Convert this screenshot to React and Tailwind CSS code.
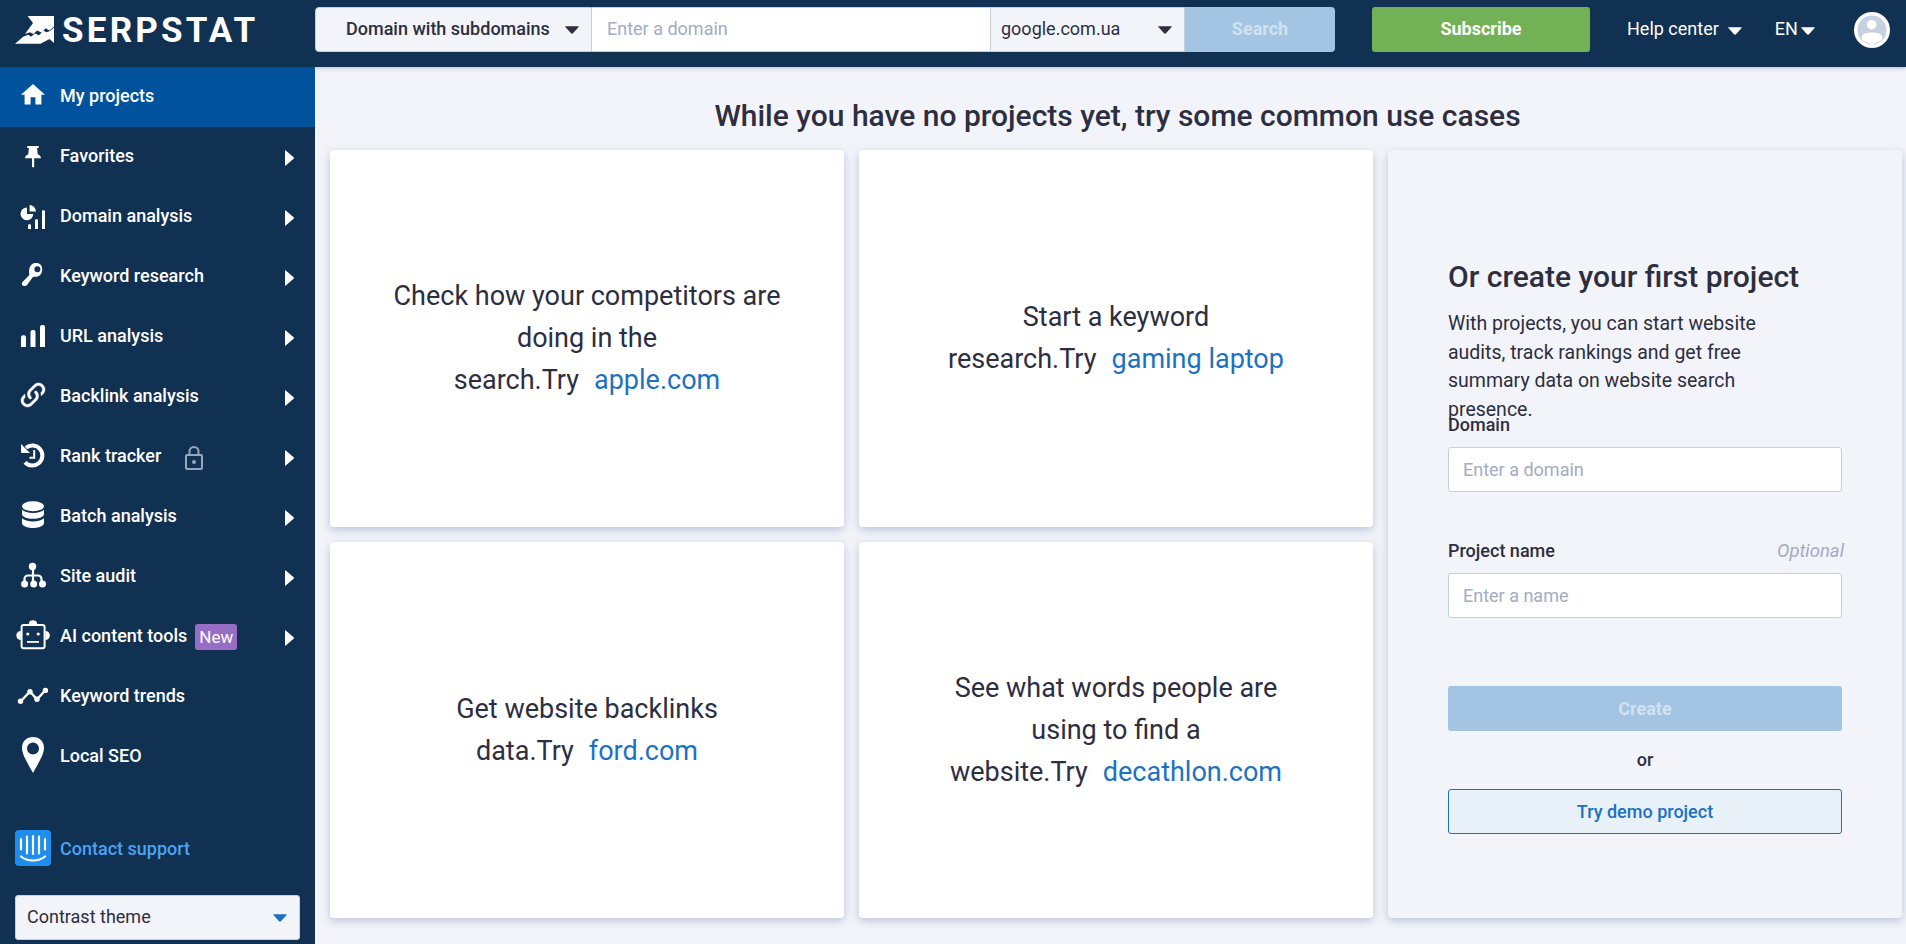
import React from "react";

const Caret = ({ className = "" }) => (
  <svg className={`h-2 w-3.5 shrink-0 ${className}`} viewBox="0 0 14 8" fill="currentColor">
    <path d="M0.6 0.3h12.8q.6 0 .2.6L8 7.2q-1 .9-2 0L.4.9Q0 .3.6.3z" />
  </svg>
);

const icons = {
  home: <path transform="translate(5.6 3.4) scale(1.2)" d="M10 20v-6h4v6h5v-8h3L12 3 2 12h3v8z" />,
  pin: <path d="M14.3 9h11.4v2h-1.6l.6 6.3c2 .8 3.3 2.1 3.3 4h-6.8v9h-2.2v-9h-7c0-1.900 1.300-3.200 3.300-4l.6-6.300h-1.600z" />,
  domain: (
    <>
      <path d="M14 10.500v6.500h6.300a6.400 6.400 0 1 1-6.300-6.500z" />
      <path d="M16.600 8a6.600 6.600 0 0 1 6.300 6.500h-6.300z" />
      <path d="M15 32v-3.500a1.500 1.500 0 0 1 3 0V32zM22 32v-8.500a1.500 1.500 0 0 1 3 0V32zM29 32V14.500a1.500 1.500 0 0 1 3 0V32z" />
    </>
  ),
  key: (
    <path
      fillRule="evenodd"
      d="M22 6c4.500-.5 7.500 2.300 7.200 6.700-.3 4.800-3.600 7.700-7.700 7-.9-.1-1.500.1-2 .800l-5.500 7.500c-1 1.300-3.800 1.600-4.800 0-.6-1-.3-2.300.5-3.300l6-5.900c.600-.6.7-1.100.5-2C15.400 10.500 18 6.500 22 6zm2.400 3.200a3 3 0 1 0 0 6 3 3 0 0 0 0-6z"
    />
  ),
  bars: <path d="M8 30V20.300a2 2 0 0 1 2-2h1a2 2 0 0 1 2 2V30zM17.500 30V15a2 2 0 0 1 2-2h1a2 2 0 0 1 2 2v15zM27 30V10a2 2 0 0 1 2-2h1a2 2 0 0 1 2 2v20z" />,
  link: (
    <path
      transform="translate(4.400 2.400) scale(1.300)"
      stroke="currentColor"
      strokeWidth="0.3"
      d="M10.590,13.410C11,13.800 11,14.440 10.590,14.830C10.200,15.220 9.560,15.220 9.170,14.830C7.220,12.880 7.220,9.710 9.170,7.760V7.760L12.710,4.220C14.660,2.270 17.830,2.270 19.780,4.220C21.730,6.170 21.730,9.340 19.780,11.290L18.290,12.780C18.300,11.960 18.170,11.140 17.890,10.360L18.360,9.880C19.540,8.710 19.540,6.810 18.360,5.640C17.190,4.460 15.290,4.460 14.120,5.640L10.590,9.170C9.410,10.340 9.410,12.240 10.590,13.410M13.410,9.170C13.800,8.780 14.440,8.780 14.830,9.170C16.780,11.120 16.780,14.290 14.830,16.240V16.240L11.290,19.780C9.340,21.730 6.170,21.730 4.220,19.780C2.270,17.830 2.270,14.660 4.220,12.710L5.710,11.220C5.700,12.040 5.830,12.860 6.110,13.650L5.640,14.120C4.460,15.290 4.460,17.190 5.640,18.360C6.810,19.540 8.710,19.540 9.880,18.360L13.410,14.830C14.590,13.660 14.590,11.760 13.410,10.590C13,10.200 13,9.560 13.410,9.170Z"
    />
  ),
  history: (
    <>
      <path d="M13 10.800A10 10 0 1 1 12 25.300" fill="none" stroke="currentColor" strokeWidth="4" />
      <path d="M8 7l9 9H9a1 1 0 0 1-1-1z" />
      <path d="M21.200 13v7.800H16.500" fill="none" stroke="currentColor" strokeWidth="2" />
    </>
  ),
  database: (
    <>
      <ellipse cx="20" cy="9.300" rx="11" ry="5" />
      <path d="M9 12.800c2 2 6 3.200 11 3.200s9-1.200 11-3.200v4.200c0 2.700-5 4.800-11 4.800S9 19.700 9 17z" />
      <path d="M9 21.200c2 2 6 3.200 11 3.200s9-1.200 11-3.200v4.800c0 2.800-5 5-11 5S9 28.800 9 26z" />
    </>
  ),
  sitemap: (
    <>
      <g fill="none" stroke="currentColor" strokeWidth="2.200">
        <path d="M20 9v18M11.500 27v-5a3.500 3.500 0 0 1 3.500-3.500h10a3.500 3.500 0 0 1 3.500 3.500v5" />
      </g>
      <circle cx="19.500" cy="9.500" r="3.700" />
      <circle cx="11.600" cy="27" r="3.500" />
      <circle cx="20.700" cy="27" r="3.500" />
      <circle cx="29.500" cy="27" r="3.500" />
    </>
  ),
  robot: (
    <>
      <rect x="8.600" y="8" width="23" height="23.200" rx="2" fill="none" stroke="currentColor" strokeWidth="2" />
      <path d="M15.800 7a4.200 3.800 0 0 1 8.400 0v1h-8.400zM7.800 14v9a4.500 4.500 0 0 1 0-9zM32.400 14v9a4.500 4.500 0 0 0 0-9z" />
      <circle cx="14.800" cy="17" r="1.600" />
      <circle cx="25.200" cy="17" r="1.600" />
      <path d="M14 24h12v1.800H14z" />
    </>
  ),
  trend: (
    <>
      <path d="M7.500 24.500L17 14.500l7 8L32.500 13" fill="none" stroke="currentColor" strokeWidth="2.400" />
      <circle cx="7.500" cy="24.300" r="2.700" />
      <circle cx="17" cy="14.800" r="2.700" />
      <circle cx="24" cy="22.300" r="2.700" />
      <circle cx="32.400" cy="13.400" r="2.700" />
    </>
  ),
  marker: (
    <path
      fillRule="evenodd"
      d="M20 0c6.500 0 11 4.600 11 10.600 0 7-5 14.400-11 25.400C14 25 9 17.600 9 10.600 9 4.600 13.500 0 20 0zm0 5.500a6 6 0 1 0 0 12 6 6 0 0 0 0-12z"
    />
  ),
};

const items = [
  { icon: "home", label: "My projects", active: true },
  { icon: "pin", label: "Favorites", more: true },
  { icon: "domain", label: "Domain analysis", more: true },
  { icon: "key", label: "Keyword research", more: true },
  { icon: "bars", label: "URL analysis", more: true },
  { icon: "link", label: "Backlink analysis", more: true },
  { icon: "history", label: "Rank tracker", more: true, locked: true },
  { icon: "database", label: "Batch analysis", more: true },
  { icon: "sitemap", label: "Site audit", more: true },
  { icon: "robot", label: "AI content tools", more: true, isNew: true },
  { icon: "trend", label: "Keyword trends" },
  { icon: "marker", label: "Local SEO" },
];

function NavItem({ item }) {
  return (
    <a className={`flex h-[60px] items-center pl-[13px] pr-[21px] text-white ${item.active ? "bg-[#00529c]" : ""}`}>
      <svg className="h-10 w-10 shrink-0" viewBox="0 0 40 40" fill="currentColor">
        {icons[item.icon]}
      </svg>
      <span className="ml-[7px] pb-0.5 text-[18px] font-medium leading-6">{item.label}</span>
      {item.locked && (
        <svg className="ml-6 mt-0.5 h-6 w-[18px]" viewBox="0 0 18 24" fill="none" stroke="#98a5c0" strokeWidth="2">
          <rect x="1" y="9" width="16" height="14" rx="1" />
          <path d="M4.500 9V5.500a4.500 4.500 0 0 1 9 0V9" />
          <circle cx="9" cy="16" r="2" fill="#98a5c0" stroke="none" />
        </svg>
      )}
      {item.isNew && (
        <span className="ml-[8px] flex h-[26px] w-[42px] items-center justify-center rounded-[3px] bg-[#976dc5] pb-px text-[17px] leading-6">
          New
        </span>
      )}
      {item.more && (
        <svg className="ml-auto mt-px h-4 w-[9px]" viewBox="0 0 9 16" fill="currentColor">
          <path d="M0 .8Q0-.3.8.5L8.600 7.300q.7.700 0 1.400L.8 15.500Q0 16.300 0 15.200z" />
        </svg>
      )}
    </a>
  );
}

function Logo() {
  return (
    <div className="flex w-[315px] shrink-0 items-start pl-[15px] text-white">
      <svg className="mt-4 h-7 w-[39px]" viewBox="0 0 39 28" fill="currentColor">
        <path d="M12.600 0H39v10.500l-4.500 4-4-2.300-3.500 4.600-5-2.200-3.500 3.400-3.500-1.800-5 1.700 8-10.900z" />
        <path d="M0 27.700l8.500-7.200 5-1.700 2.500 2 4-3.300 4 1.700 4.500-4.400 3 1.500 3.500-1.300 4-3.500V27l-4.500-4-9 4.700z" />
      </svg>
      <span className="ml-[8px] mt-[11px] text-[35px] font-bold leading-10 tracking-[3.200px]">SERPSTAT</span>
    </div>
  );
}

function Header() {
  return (
    <header className="relative z-10 flex h-[67px] bg-[#113153] shadow-[0_1px_4px_rgba(60,80,150,0.35)]">
      <Logo />
      <div className="mt-[7px] flex h-[45px] text-[18px] leading-6 text-[#2d2e3f]">
        <div className="flex w-[277px] items-center justify-between rounded-l-[4px] border border-[#c4d0e0] bg-[#f3f4f9] pb-px pl-[30px] pr-[12px]">
          <span className="font-medium">Domain with subdomains</span>
          <Caret className="mt-px" />
        </div>
        <div className="flex w-[398px] items-center border-y border-[#c4d0e0] bg-white pb-px pl-[15px] text-[#a3abc5]">Enter a domain</div>
        <div className="flex w-[195px] items-center justify-between border border-[#c4d0e0] bg-[#f3f4f9] pb-px pl-[10px] pr-[12px]">
          <span>google.com.ua</span>
          <Caret className="mt-px" />
        </div>
        <button className="w-[150px] rounded-r-[4px] bg-[#a3c5e3] pb-px font-bold text-[#d1e2f1]">Search</button>
      </div>
      <button className="ml-[37px] mt-[7px] h-[45px] w-[218px] rounded-[3px] bg-[#73b157] pb-px text-[18px] font-bold leading-6 text-white">
        Subscribe
      </button>
      <div className="ml-[37px] mt-[17px] flex h-6 items-center text-[18px] leading-6 text-white">
        <span>Help center</span>
        <Caret className="ml-[9px] mt-[3px]" />
        <span className="ml-[33px]">EN</span>
        <Caret className="ml-[3px] mt-[3px]" />
      </div>
      <svg className="ml-auto mr-4 mt-3 h-9 w-9" viewBox="0 0 36 36">
        <circle cx="18" cy="18" r="18" fill="#fff" />
        <circle cx="18" cy="18" r="14.500" fill="#c5d0e0" />
        <circle cx="17.700" cy="12.700" r="4.800" fill="#fff" />
        <path d="M8 28v-3c0-3.500 5-4.500 10-4.500s10 1 10 4.500v3l-10 5z" fill="#fff" />
      </svg>
    </header>
  );
}

const cardShadow = "rounded-[4px] shadow-[0_3px_8px_rgba(80,110,160,0.35)]";

function UseCase({ lines, last, link }) {
  return (
    <div className={`flex items-center justify-center bg-white text-center text-[27px] leading-[42px] ${cardShadow}`}>
      <p>
        {lines.map((line) => (
          <span className="block" key={line}>
            {line}
          </span>
        ))}
        <span className="block">
          {last}
          <a className="ml-[15px] text-[#1c72c2]">{link}</a>
        </span>
      </p>
    </div>
  );
}

function Field({ label, optional, placeholder }) {
  return (
    <div className="text-[18px]">
      <div className="flex justify-between leading-6">
        <span className="font-medium">{label}</span>
        {optional && <span className="-mr-0.5 text-[18.500px] italic text-[#a3abc5]">Optional</span>}
      </div>
      <div className="mt-2.5 flex h-[45px] items-center rounded-[3px] border border-[#c4d0e0] bg-white pl-[14px] leading-6 text-[#a3abc5]">
        {placeholder}
      </div>
    </div>
  );
}

function ProjectForm() {
  return (
    <section className={`row-span-2 bg-[#f3f4f9] pl-[60px] pr-[60px] pt-[106px] ${cardShadow}`}>
      <h2 className="text-[30px] font-medium leading-[42px]">Or create your first project</h2>
      <p className="mt-[12px] h-[103px] w-[325px] text-[19.500px] leading-[28.700px]">
        With projects, you can start website audits, track rankings and get free summary data on website search presence.
      </p>
      <Field label="Domain" placeholder="Enter a domain" />
      <div className="h-[47px]" />
      <Field label="Project name" optional placeholder="Enter a name" />
      <button className="mt-[68px] block h-[45px] w-full rounded-[3px] bg-[#a3c5e3] text-[18px] font-bold leading-6 text-[#d1e2f1]">
        Create
      </button>
      <p className="my-[17px] text-center text-[18px] font-medium leading-6">or</p>
      <button className="block h-[45px] w-full rounded-[3px] border border-[#1c72c2] bg-[#e8f0f8] text-[18px] font-medium leading-6 text-[#1c72c2]">
        Try demo project
      </button>
    </section>
  );
}

export default function App() {
  return (
    <div className="h-[944px] w-[1906px] overflow-hidden bg-[#f3f4f9] font-[Roboto,sans-serif] text-[#2d2e3f]">
      <Header />
      <div className="flex h-[877px]">
        <aside className="relative z-20 w-[315px] shrink-0 bg-[#113153]">
          <nav>
            {items.map((item) => (
              <NavItem item={item} key={item.label} />
            ))}
          </nav>
          <a className="mt-[43px] flex items-center pl-[15px] text-[#4ba3f3]">
            <svg className="h-9 w-9" viewBox="0 0 36 36" fill="none" stroke="#fff" strokeWidth="2.200" strokeLinecap="round">
              <rect width="36" height="36" rx="4" fill="#1f8ded" stroke="none" />
              <path d="M6 9v10.500M12 6.500v17M18 6v18M24 6.500v17M30 9v10.500M6 26.500c6.500 5.300 17.500 5.300 24 0" />
            </svg>
            <span className="ml-[9px] pt-0.5 text-[18px] font-medium leading-6">Contact support</span>
          </a>
          <div className="ml-[15px] mt-[29px] flex h-[45px] w-[285px] items-center justify-between rounded-[3px] border border-[#c4d0e0] bg-[#f3f4f9] pb-px pl-[11px] pr-[12px] text-[18px] leading-6">
            <span>Contrast theme</span>
            <Caret className="mt-px text-[#1c72c2]" />
          </div>
        </aside>
        <main className="flex flex-1 flex-col pl-[15px] pr-[4px]">
          <h1 className="mt-[29px] pl-[3px] text-center text-[30px] font-medium leading-[40px]">
            While you have no projects yet, try some common use cases
          </h1>
          <div className="mt-[14px] grid h-[768px] grid-cols-3 grid-rows-2 gap-[15px]">
            <UseCase lines={["Check how your competitors are", "doing in the"]} last="search.Try" link="apple.com" />
            <UseCase lines={["Start a keyword"]} last="research.Try" link="gaming laptop" />
            <ProjectForm />
            <UseCase lines={["Get website backlinks"]} last="data.Try" link="ford.com" />
            <UseCase lines={["See what words people are", "using to find a"]} last="website.Try" link="decathlon.com" />
          </div>
        </main>
      </div>
    </div>
  );
}
